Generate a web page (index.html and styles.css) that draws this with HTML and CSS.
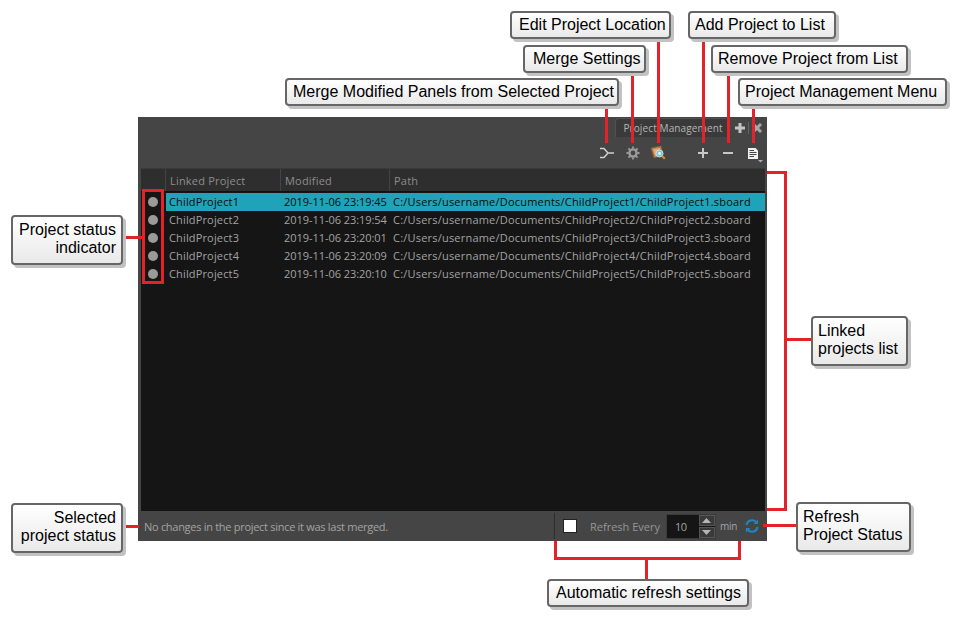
FILE: index.html
```html
<!DOCTYPE html>
<html lang="en">
<head>
    <meta charset="UTF-8">
    <meta name="viewport" content="width=device-width, initial-scale=1.0">
    <title>Project Management</title>
    <link rel="stylesheet" href="styles.css">
</head>
<body>
    <div class="canvas">
        <div class="panel">
            <div class="tab-row">
                <div class="tab">Project Management</div>
                <svg class="tab-add" width="12" height="12" viewBox="0 0 12 12"><path d="M6 1v10M1 6h10" stroke="#c4c4c4" stroke-width="3"/></svg>
                <span class="tab-sep"></span>
                <svg class="tab-close" width="10" height="10" viewBox="0 0 10 10"><path d="M1 1l8 8M9 1l-8 8" stroke="#a8a8a8" stroke-width="3"/></svg>
            </div>
            <div class="toolbar">
                <svg class="tool tool-merge" width="16" height="12" viewBox="0 0 16 12"><path d="M1 1.500h4l4 4.500h6M1 10.500h4l4-4.500" fill="none" stroke="#cfcfcf" stroke-width="1.500"/></svg>
                <svg class="tool tool-gear" width="14" height="14" viewBox="0 0 14 14"><circle cx="7" cy="7" r="3.600" fill="none" stroke="#9c9c9c" stroke-width="2.400"/><path d="M7 .5v13M.5 7h13M2.400 2.400l9.200 9.200M11.600 2.400l-9.200 9.200" stroke="#9c9c9c" stroke-width="1.800" stroke-dasharray="2 9"/></svg>
                <svg class="tool tool-map" width="16" height="16" viewBox="0 0 16 16"><path d="M1 3l10-2 2 9-9 3z" fill="#b87d45" stroke="#8a5a2e" stroke-width=".6"/><path d="M3 4.200l6.800-1.300 1.300 6-6 2z" fill="#dcb283"/><circle cx="9.500" cy="8.500" r="3.500" fill="#6fc9dc" stroke="#d8d8d8" stroke-width="1"/><circle cx="9.500" cy="8.500" r="1.400" fill="#e6f6fa"/><path d="M12 11l2.800 2.800" stroke="#d98a34" stroke-width="2"/></svg>
                <svg class="tool tool-plus" width="12" height="12" viewBox="0 0 12 12"><path d="M6 1v10M1 6h10" stroke="#c8c8c8" stroke-width="2"/></svg>
                <svg class="tool tool-minus" width="12" height="12" viewBox="0 0 12 12"><path d="M1 6h10" stroke="#c8c8c8" stroke-width="2"/></svg>
                <svg class="tool tool-menu" width="16" height="16" viewBox="0 0 16 16"><path d="M1 1h7.500L11 3.500V12H1z" fill="#f0f0f0"/><path d="M2.500 3.500h4.500M2.500 5.500h7M2.500 7.500h7M2.500 9.500h4.500" stroke="#444" stroke-width="1"/><path d="M11 13h5l-2.500 2.500z" fill="#b0b0b0"/></svg>
            </div>
            <div class="list">
                <div class="list-head">
                    <div class="col col-status"></div>
                    <div class="col col-name">Linked Project</div>
                    <div class="col col-date">Modified</div>
                    <div class="col col-path">Path</div>
                </div>
                <div class="row selected">
                    <div class="cell-status"><span class="dot"></span></div>
                    <div class="cell-name">ChildProject1</div>
                    <div class="cell-date">2019-11-06 23:19:45</div>
                    <div class="cell-path">C:/Users/username/Documents/ChildProject1/ChildProject1.sboard</div>
                </div>
                <div class="row">
                    <div class="cell-status"><span class="dot"></span></div>
                    <div class="cell-name">ChildProject2</div>
                    <div class="cell-date">2019-11-06 23:19:54</div>
                    <div class="cell-path">C:/Users/username/Documents/ChildProject2/ChildProject2.sboard</div>
                </div>
                <div class="row">
                    <div class="cell-status"><span class="dot"></span></div>
                    <div class="cell-name">ChildProject3</div>
                    <div class="cell-date">2019-11-06 23:20:01</div>
                    <div class="cell-path">C:/Users/username/Documents/ChildProject3/ChildProject3.sboard</div>
                </div>
                <div class="row">
                    <div class="cell-status"><span class="dot"></span></div>
                    <div class="cell-name">ChildProject4</div>
                    <div class="cell-date">2019-11-06 23:20:09</div>
                    <div class="cell-path">C:/Users/username/Documents/ChildProject4/ChildProject4.sboard</div>
                </div>
                <div class="row">
                    <div class="cell-status"><span class="dot"></span></div>
                    <div class="cell-name">ChildProject5</div>
                    <div class="cell-date">2019-11-06 23:20:10</div>
                    <div class="cell-path">C:/Users/username/Documents/ChildProject5/ChildProject5.sboard</div>
                </div>
            </div>
            <div class="statusbar">
                <div class="status-msg">No changes in the project since it was last merged.</div>
                <div class="refresh">
                    <span class="check"></span>
                    <span class="refresh-label">Refresh Every</span>
                    <div class="spin">
                        <span class="spin-value">10</span>
                        <div class="spin-btns">
                            <span class="spin-btn"><svg width="9" height="5" viewBox="0 0 9 5"><path d="M4.500 0l4.500 5H0z" fill="#b5b5b5"/></svg></span>
                            <span class="spin-btn"><svg width="9" height="5" viewBox="0 0 9 5"><path d="M0 0h9L4.500 5z" fill="#b5b5b5"/></svg></span>
                        </div>
                    </div>
                    <span class="refresh-unit">min</span>
                    <svg class="refresh-icon" width="14" height="14" viewBox="0 0 14 14"><path d="M1.500 6A5.500 5.500 0 0 1 11 3" fill="none" stroke="#1d86c8" stroke-width="2"/><path d="M12.500 8A5.500 5.500 0 0 1 3 11" fill="none" stroke="#1d86c8" stroke-width="2"/><path d="M13 .5V5H8.500zM1 13.500V9h4.500z" fill="#1d86c8"/></svg>
                </div>
            </div>
        </div>

        <!-- leader lines -->
        <div class="line v l-merge"></div>
        <div class="line v l-settings"></div>
        <div class="line v l-edit"></div>
        <div class="line v l-add"></div>
        <div class="line v l-remove"></div>
        <div class="line v l-menu"></div>
        <div class="status-box"></div>
        <div class="line h l-status"></div>
        <div class="line h l-selected"></div>
        <div class="list-bracket"></div>
        <div class="line h l-linked"></div>
        <div class="line h l-refresh"></div>
        <div class="auto-bracket"></div>
        <div class="line v l-auto"></div>

        <!-- callouts -->
        <div class="callout c-edit">Edit Project Location</div>
        <div class="callout c-settings">Merge Settings</div>
        <div class="callout c-merge">Merge Modified Panels from Selected Project</div>
        <div class="callout c-add">Add Project to List</div>
        <div class="callout c-remove">Remove Project from List</div>
        <div class="callout c-menu">Project Management Menu</div>
        <div class="callout tall right c-status">Project status<br>indicator</div>
        <div class="callout tall right c-selected">Selected<br>project status</div>
        <div class="callout tall c-linked">Linked<br>projects list</div>
        <div class="callout tall c-refresh">Refresh<br>Project Status</div>
        <div class="callout c-auto">Automatic refresh settings</div>
    </div>
</body>
</html>
```
FILE: styles.css
```css
body {
    margin: 0;
    background: #fff;
    font-family: "Liberation Sans", Arial, sans-serif;
}
.canvas {
    position: relative;
    width: 962px;
    height: 623px;
    overflow: hidden;
}

/* panel */
.panel {
    position: absolute;
    left: 138px;
    top: 117px;
    width: 629px;
    height: 424px;
    background: #454545;
    display: flex;
    flex-direction: column;
    font-family: "Open Sans", sans-serif;
    font-size: 11px;
    color: #a8a8a8;
}
.tab-row {
    height: 20px;
    display: flex;
    align-items: center;
    padding: 1px 0 0 477px;
    box-sizing: border-box;
}
.tab {
    width: 112px;
    height: 19px;
    box-sizing: border-box;
    padding-left: 4px;
    line-height: 21px;
    font-size: 10px;
    letter-spacing: .12px;
    text-align: center;
    background: #3a3a3a;
    color: #b5b5b5;
    border-radius: 3px 3px 0 0;
    box-shadow: inset 1px 1px 0 #505050;
}
.tab-add {
    margin-left: 7px;
}
.tab-sep {
    width: 1px;
    height: 12px;
    margin-left: 2px;
    background: #666;
}
.tab-close {
    margin-left: 3px;
}
.toolbar {
    height: 31px;
    position: relative;
}
.tool {
    position: absolute;
}
.tool-merge { left: 461px; top: 10px; }
.tool-gear { left: 488px; top: 9px; }
.tool-map { left: 512px; top: 8px; }
.tool-plus { left: 559px; top: 10px; }
.tool-minus { left: 584px; top: 10px; }
.tool-menu { left: 609px; top: 10px; }

.list {
    flex: 1;
    margin: 0 2px 0 3px;
    background: #151515;
    border-top: 1px solid #3a3a3a;
}
.list-head {
    display: flex;
    height: 22px;
    background: #2e2e2e;
    margin-bottom: 1px;
    border-bottom: 1px solid #111;
    color: #8d8d8d;
    letter-spacing: .2px;
}
.col {
    line-height: 24px;
    box-sizing: border-box;
    padding-left: 4px;
    border-right: 1px solid #444;
}
.col-status { width: 25px; }
.col-name { width: 115px; }
.col-date { width: 109px; }
.col-path { flex: 1; border-right: 0; }

.row {
    display: flex;
    height: 18px;
    line-height: 18px;
    color: #a3a3a3;
    white-space: nowrap;
}
.row.selected .cell-name,
.row.selected .cell-date,
.row.selected .cell-path {
    background: #1fa3b8;
    color: #0c0c0c;
}
.cell-status {
    width: 25px;
    padding-right: 1px;
    box-sizing: border-box;
    display: flex;
    align-items: center;
    justify-content: center;
}
.cell-name {
    width: 114px;
    padding-left: 3px;
    box-sizing: border-box;
    letter-spacing: .15px;
}
.cell-date {
    width: 110px;
    padding-left: 4px;
    box-sizing: border-box;
    letter-spacing: -.05px;
}
.cell-path {
    flex: 1;
    padding-left: 3px;
    letter-spacing: .21px;
}
.dot {
    width: 10px;
    height: 10px;
    border-radius: 50%;
    background: #9a9a9a;
}

.statusbar {
    height: 30px;
    display: flex;
    align-items: center;
    justify-content: space-between;
}
.status-msg {
    padding-left: 6px;
    color: #a3a3a3;
    letter-spacing: -.29px;
}
.refresh {
    width: 213px;
    height: 26px;
    box-sizing: border-box;
    border-left: 1px solid #2e2e2e;
    display: flex;
    align-items: center;
    padding-left: 8px;
}
.check {
    width: 12px;
    height: 12px;
    background: #fff;
    border: 1px solid #222;
}
.refresh-label {
    margin-left: 13px;
    color: #969696;
}
.spin {
    width: 50px;
    height: 25px;
    margin-left: 6px;
    background: #151515;
    border: 1px solid #3a3a3a;
    box-sizing: border-box;
    display: flex;
    align-items: center;
    justify-content: space-between;
}
.spin-value {
    padding-left: 8px;
    color: #a3a3a3;
    letter-spacing: -.5px;
}
.spin-btns {
    display: flex;
    flex-direction: column;
    gap: 1px;
}
.spin-btn {
    width: 16px;
    height: 11px;
    box-sizing: border-box;
    background: #3a3a3a;
    border: 1px solid #555;
    display: flex;
    align-items: center;
    justify-content: center;
}
.refresh-unit {
    margin-left: 4px;
    width: 16px;
    font-size: 10px;
    letter-spacing: -.2px;
    color: #a3a3a3;
}
.refresh-icon {
    margin-left: 9px;
}

/* red leader lines */
.line {
    position: absolute;
    background: #e2232a;
}
.v { width: 3px; }
.h { height: 3px; }
.l-merge { left: 605px; top: 105px; height: 38px; }
.l-settings { left: 631px; top: 72px; height: 71px; }
.l-edit { left: 657px; top: 38px; height: 105px; }
.l-add { left: 702px; top: 38px; height: 105px; }
.l-remove { left: 727px; top: 72px; height: 71px; }
.l-menu { left: 752px; top: 105px; height: 38px; }
.l-status { left: 123px; top: 236px; width: 19px; }
.l-selected { left: 123px; top: 525px; width: 16px; }
.l-linked { left: 787px; top: 338px; width: 24px; }
.l-refresh { left: 763px; top: 524px; width: 34px; }
.l-auto { left: 645px; top: 558px; height: 21px; }
.status-box {
    position: absolute;
    left: 142px;
    top: 189px;
    width: 16px;
    height: 89px;
    border: 3px solid #e2232a;
}
.list-bracket {
    position: absolute;
    left: 767px;
    top: 171px;
    width: 17px;
    height: 334px;
    border: 3px solid #e2232a;
    border-left: 0;
}
.auto-bracket {
    position: absolute;
    left: 554px;
    top: 541px;
    width: 181px;
    height: 16px;
    border: 3px solid #e2232a;
    border-top: 0;
}

/* callouts */
.callout {
    position: absolute;
    box-sizing: border-box;
    height: 28px;
    line-height: 23px;
    padding: 0 6px;
    font-size: 16px;
    color: #000;
    white-space: nowrap;
    background: linear-gradient(to bottom, #fff, #e9e9e9);
    border: 2px solid #666;
    border-radius: 4px;
    box-shadow: 3px 3px 0 #c2c2c2;
}
.callout.tall {
    height: 50px;
    line-height: 18px;
    padding: 4px 5px;
}
.callout.right {
    text-align: right;
}
.c-edit { left: 510px; top: 11px; width: 161px; padding-left: 7px; }
.c-settings { left: 523px; top: 45px; width: 123px; padding-left: 8px; }
.c-merge { left: 285px; top: 78px; width: 334px; }
.c-add { left: 688px; top: 11px; width: 148px; padding-left: 5px; }
.c-remove { left: 711px; top: 45px; width: 197px; padding-left: 5px; }
.c-menu { left: 738px; top: 78px; width: 209px; padding-left: 5px; }
.c-status { left: 11px; top: 215px; width: 112px; }
.c-selected { left: 11px; top: 503px; width: 112px; padding-top: 5px; }
.c-linked { left: 811px; top: 316px; width: 97px; line-height: 19px; padding-top: 5px; }
.c-refresh { left: 796px; top: 502px; width: 115px; }
.c-auto { left: 547px; top: 579px; width: 202px; padding-left: 7px; line-height: 24px; }
```
